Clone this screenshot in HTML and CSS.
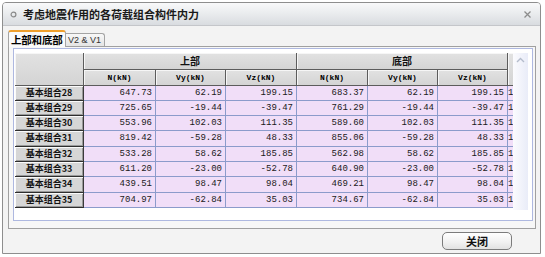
FILE: index.html
```html
<!DOCTYPE html>
<html lang="zh">
<head>
<meta charset="utf-8">
<link rel="stylesheet" href="styles.css">
</head>
<body>
<div class="win">
  <div class="titlebar">
    <svg class="ticon" width="7" height="7" viewBox="0 0 7 7"><circle cx="3.5" cy="3.5" r="2.4" fill="none" stroke="#8a8a8a" stroke-width="1.2"/></svg>
    <span class="title">考虑地震作用的各荷载组合构件内力</span>
    <svg class="close" width="7" height="7" viewBox="0 0 7 7"><path d="M0.5 0.5L6.5 6.5M6.5 0.5L0.5 6.5" stroke="#8c8c8c" stroke-width="1.3"/></svg>
  </div>
  <div class="body">
    <div class="tabs">
      <div class="tab active">上部和底部</div>
      <div class="tab">V2 &amp; V1</div>
    </div>
    <div class="panel">
      <div class="scrollarea">
        <div class="grid">
          <div class="hd corner"></div>
          <div class="hd grp g1">上部</div>
          <div class="hd grp g2">底部</div>
          <div class="hd extra"></div>
          <div class="hd sub">N(kN)</div>
          <div class="hd sub">Vy(kN)</div>
          <div class="hd sub">Vz(kN)</div>
          <div class="hd sub">N(kN)</div>
          <div class="hd sub">Vy(kN)</div>
          <div class="hd sub">Vz(kN)</div>

          <div class="rh">基本组合28</div><div class="c">647.73</div><div class="c">62.19</div><div class="c">199.15</div><div class="c">683.37</div><div class="c">62.19</div><div class="c">199.15</div><div class="c x">1</div>
          <div class="rh">基本组合29</div><div class="c">725.65</div><div class="c">-19.44</div><div class="c">-39.47</div><div class="c">761.29</div><div class="c">-19.44</div><div class="c">-39.47</div><div class="c x">1</div>
          <div class="rh">基本组合30</div><div class="c">553.96</div><div class="c">102.03</div><div class="c">111.35</div><div class="c">589.60</div><div class="c">102.03</div><div class="c">111.35</div><div class="c x">1</div>
          <div class="rh">基本组合31</div><div class="c">819.42</div><div class="c">-59.28</div><div class="c">48.33</div><div class="c">855.06</div><div class="c">-59.28</div><div class="c">48.33</div><div class="c x">1</div>
          <div class="rh">基本组合32</div><div class="c">533.28</div><div class="c">58.62</div><div class="c">185.85</div><div class="c">562.98</div><div class="c">58.62</div><div class="c">185.85</div><div class="c x">1</div>
          <div class="rh">基本组合33</div><div class="c">611.20</div><div class="c">-23.00</div><div class="c">-52.78</div><div class="c">640.90</div><div class="c">-23.00</div><div class="c">-52.78</div><div class="c x">1</div>
          <div class="rh">基本组合34</div><div class="c">439.51</div><div class="c">98.47</div><div class="c">98.04</div><div class="c">469.21</div><div class="c">98.47</div><div class="c">98.04</div><div class="c x">1</div>
          <div class="rh">基本组合35</div><div class="c">704.97</div><div class="c">-62.84</div><div class="c">35.03</div><div class="c">734.67</div><div class="c">-62.84</div><div class="c">35.03</div><div class="c x">1</div>
        </div>
        <div class="vscroll">
          <svg class="up" width="9" height="6" viewBox="0 0 9 6"><path d="M1 5L4.5 1.5L8 5" fill="none" stroke="#b4bccc" stroke-width="1.4"/></svg>
        </div>
      </div>
    </div>
    <div class="footer">
      <button class="btn">关闭</button>
    </div>
  </div>
</div>
</body>
</html>
```
FILE: styles.css
```css
* { box-sizing: border-box; }
html, body { margin: 0; padding: 0; background: #ffffff; }
body { font-family: "Noto Sans CJK SC", "Liberation Sans", sans-serif; color: #111; }

.win {
  margin: 2px 0 0 2px;
  width: 539px;
  border: 1px solid #8e8e8e;
  border-radius: 4px 4px 0 0;
  background: #f3f3f3;
}

.titlebar {
  height: 23px;
  display: flex;
  align-items: center;
  padding: 0 9px 0 7px;
  background: linear-gradient(#f9f9fa 0%, #eceef0 40%, #d9dce0 100%);
  border-bottom: 1px solid #c4c6ca;
  border-radius: 3px 3px 0 0;
}
.ticon { flex: none; margin-right: 6px; }
.title {
  font-size: 11px;
  font-weight: 700;
  color: #1a1a1a;
  flex: 1;
  line-height: 22px;
}
.close { flex: none; }

.body { padding: 4px 4px 0 5px; }

.tabs { display: flex; align-items: flex-end; height: 16px; }
.tab {
  height: 13px;
  padding: 0 3px 0 2px;
  font-family: "Liberation Sans", sans-serif;
  font-size: 9px;
  line-height: 12px;
  color: #333;
  background: linear-gradient(#f8f8f8, #e4e4e4);
  border: 1px solid #a4a4a4;
  border-bottom: none;
  border-left: none;
  border-radius: 0 3px 0 0;
  white-space: nowrap;
}
.tab.active {
  height: 17px;
  width: 58px;
  margin-bottom: -1px;
  padding: 0 0 0 2px;
  font-family: "Noto Sans CJK SC", sans-serif;
  font-size: 10.5px;
  font-weight: 700;
  line-height: 15px;
  color: #000;
  background: #fafafa;
  border: 1px solid #a4a4a4;
  border-top: 2px solid #f0a02c;
  border-bottom: none;
  border-radius: 3px 3px 0 0;
  letter-spacing: -0.2px;
}

.panel {
  width: 528px;
  border: 1px solid #a0a0a0;
  padding: 1px 2px 7px 4px;
  background: #f7f7f7;
}

.scrollarea {
  height: 173px;
  border: 1px solid #aeb8e0;
  background: #ffffff;
  display: flex;
  align-items: flex-start;
  padding: 4px 0 0 1px;
}

.grid {
  width: 498px;
  flex: none;
  overflow: hidden;
  display: grid;
  grid-template-columns: 69px 72px 70px 71px 71px 70px 70px 5px;
  grid-template-rows: 17px 16px 15px 15px 15px 16px 15px 15px 16px 15px;
}

.hd {
  background: linear-gradient(#e2e2e2, #d4d4d4);
  border-right: 1px solid #5c5c5c;
  border-bottom: 1px solid #5c5c5c;
  box-shadow: inset 1px 1px 0 #f6f6f6;
  display: flex;
  align-items: center;
  justify-content: center;
  font-weight: 700;
  color: #111;
}
.corner { grid-column: 1; grid-row: 1 / span 2; }
.grp { font-size: 10px; line-height: 16px; }
.g1 { grid-column: 2 / span 3; grid-row: 1; }
.g2 { grid-column: 5 / span 3; grid-row: 1; }
.extra { grid-column: 8; grid-row: 1 / span 2; border-right: none; }
.sub {
  font-family: "Liberation Mono", monospace;
  font-size: 8px;
  line-height: 15px;
  color: #000;
}

.rh {
  background: #d6d6d6;
  border-right: 1px solid #3a3a3a;
  border-bottom: 1px solid #2e2e2e;
  box-shadow: inset 1px 1px 0 #fafafa, inset -1px -1px 0 #9a9a9a;
  font-size: 9px;
  font-weight: 700;
  line-height: 14px;
  text-align: center;
  color: #111;
}

.c {
  background: #f1def8;
  border-right: 1px solid #8c9bcb;
  border-bottom: 1px solid #8c9bcb;
  font-family: "Liberation Mono", monospace;
  font-size: 9px;
  line-height: 14px;
  text-align: right;
  padding-right: 3px;
  color: #1a1a1a;
}
.c.x {
  text-align: left;
  padding: 0;
  border-right: none;
  letter-spacing: -1.5px;
  overflow: hidden;
}

.vscroll {
  flex: none;
  width: 15px;
  height: 157px;
  margin-left: 0;
  background: linear-gradient(to right, #fbfbfe, #e9ecf8);
  display: flex;
  justify-content: center;
  padding-top: 4px;
}
.up { display: block; }

.footer {
  display: flex;
  justify-content: flex-end;
  padding: 3px 24px 3px 0;
}
.btn {
  width: 70px;
  height: 18px;
  padding: 0;
  border: 1px solid #7c7c7c;
  border-radius: 5px;
  background: linear-gradient(#ffffff, #f0f0f0 60%, #e2e2e2);
  font-family: "Noto Sans CJK SC", sans-serif;
  font-size: 11px;
  font-weight: 700;
  line-height: 16px;
  color: #111;
}
```
